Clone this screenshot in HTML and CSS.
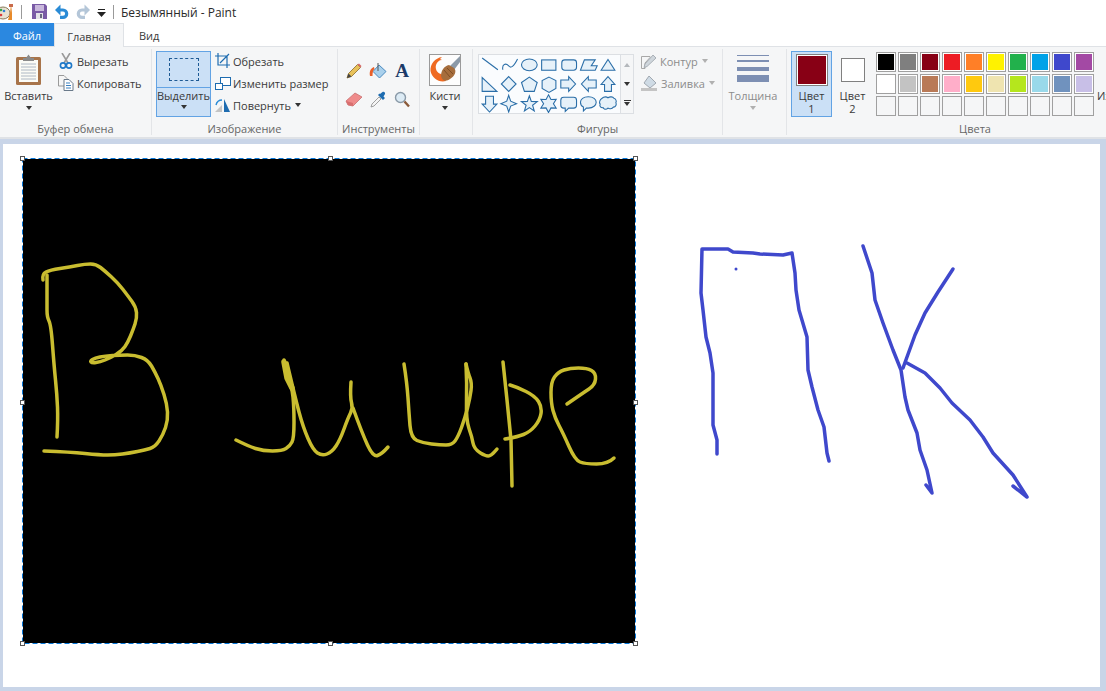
FILE: index.html
```html
<!DOCTYPE html>
<html lang="ru">
<head>
<meta charset="utf-8">
<title>Безымянный - Paint</title>
<link rel="stylesheet" href="styles.css">
</head>
<body>
<div class="app">
  <header class="titlebar">
    <svg class="ti-app" width="14" height="18" viewBox="0 0 14 18"><ellipse cx="3" cy="10" rx="7" ry="6" fill="#e8e2d0" stroke="#8a7a5a"/><circle cx="1" cy="7" r="1.3" fill="#3aa04a"/><circle cx="4" cy="8" r="1.3" fill="#2f7fd8"/><circle cx="1" cy="12" r="1.3" fill="#d83a3a"/><path d="M11 1 L10 10 L8 17 L12 17 L12 10Z" fill="#e88a2a"/><path d="M9 1h4v3H9z" fill="#c86a4a"/></svg>
    <span class="tsep"></span>
    <svg class="ti-save" width="15" height="15" viewBox="0 0 15 15"><path d="M0 0H13L15 2V15H0Z" fill="#7a5ba6"/><rect x="3" y="1" width="9" height="6" fill="#c9b8dc"/><rect x="4" y="9" width="7" height="6" fill="#e4e4e8"/><rect x="8" y="10" width="2" height="4" fill="#6a6a80"/></svg>
    <svg class="ti-undo" width="14" height="15" viewBox="0 0 14 15"><path d="M4 6 H8 A3.7 3.7 0 0 1 8 13.4 H5" fill="none" stroke="#2a8bd6" stroke-width="3.2"/><path d="M0 6 L5.5 0.5 V11.5Z" fill="#2a8bd6"/></svg>
    <svg class="ti-redo" width="14" height="15" viewBox="0 0 14 15"><path d="M10 6 H6 A3.7 3.7 0 0 0 6 13.4 H9" fill="none" stroke="#b4c6d8" stroke-width="3.2"/><path d="M14 6 L8.5 0.5 V11.5Z" fill="#b4c6d8"/></svg>
    <svg class="ti-more" width="9" height="8" viewBox="0 0 9 8"><rect x="1" y="0" width="7" height="1" fill="#222"/><path d="M0 3H9L4.5 8Z" fill="#222"/></svg>
    <span class="tsep tsep-b"></span>
    <span class="title">Безымянный - Paint</span>
  </header>

  <nav class="tabs">
    <span class="tab tab-file">Файл</span>
    <span class="tab tab-home">Главная</span>
    <span class="tab tab-view">Вид</span>
  </nav>

  <section class="ribbon">
    <div class="group g-clip">
      <div class="body">
        <div class="big big-paste">
          <svg class="big-icon" width="28" height="31" viewBox="0 0 28 31"><rect x="1" y="3" width="25" height="28" rx="1.5" fill="#a8744a"/><rect x="4" y="6" width="19" height="22" fill="#fbfbf6"/><path d="M6 10H21M6 13H21M6 16H21M6 19H21M6 22H21M6 25H21" stroke="#aeb8c4"/><path d="M8 7V4H11L13.5 0.5L16 4H19V7Z" fill="#8a8a8a"/></svg>
          <span class="btxt">Вставить</span>
          <i class="caret"></i>
        </div>
        <ul class="list list-clip">
          <li><svg width="16" height="16" viewBox="0 0 16 16"><path d="M4 0 L10 10M12 0 L6 10" stroke="#9a9a9a" stroke-width="1.6"/><circle cx="5" cy="12.5" r="2.6" fill="none" stroke="#1e78c8" stroke-width="1.6"/><circle cx="11" cy="12.5" r="2.6" fill="none" stroke="#1e78c8" stroke-width="1.6"/></svg>Вырезать</li>
          <li><svg width="16" height="16" viewBox="0 0 16 16"><path d="M0.5 0.5H6L9 3.5V11H0.5Z" fill="#f6f6f6" stroke="#9a9a9a"/><path d="M6 4.5H11L15 8.5V15.5H6Z" fill="#fff" stroke="#6a7a8a"/><path d="M8 8H12M8 10.5H13M8 13H13" stroke="#3a80c0"/></svg>Копировать</li>
        </ul>
      </div>
      <div class="glabel">Буфер обмена</div>
    </div>

    <div class="group g-image">
      <div class="body">
        <div class="select-btn">
          <div class="select-top"><span class="marquee"></span></div>
          <div class="select-bottom"><span class="btxt">Выделить</span><i class="caret caret-s"></i></div>
        </div>
        <ul class="list list-image">
          <li><svg width="16" height="16" viewBox="0 0 16 16"><path d="M3 0V12H15M0 3H12V15M14 1L5 10" fill="none" stroke="#1e6cb0" stroke-width="1.2"/></svg>Обрезать</li>
          <li><svg width="16" height="16" viewBox="0 0 16 16"><rect x="5.5" y="2.5" width="10" height="8" fill="#fff" stroke="#1e6cb0"/><rect x="0.5" y="8.5" width="7" height="6" fill="#fff" stroke="#1e6cb0"/></svg>Изменить размер</li>
          <li><svg width="16" height="16" viewBox="0 0 16 16"><path d="M9 15V2L15 15Z" fill="#1e6cb0"/><path d="M0 15L7 8V15Z" fill="#c4c4c4"/><path d="M1 8 C2 4 4 3 7 3" fill="none" stroke="#2a8bd6" stroke-width="1.4"/></svg>Повернуть<i class="caret caret-in"></i></li>
        </ul>
      </div>
      <div class="glabel">Изображение</div>
    </div>

    <div class="group g-tools">
      <div class="body tools">
        <span class="tool"><svg width="16" height="16" viewBox="0 0 16 16"><path d="M1 15L2.5 10.5L11.5 1.5L14.5 4.5L5.5 13.5Z" fill="#e8c25a" stroke="#8a6a2a" stroke-width=".8"/><path d="M11.5 1.5L14.5 4.5L15.5 3L13 .5Z" fill="#d86a6a"/><path d="M1 15L2.5 10.5L5.5 13.5Z" fill="#444"/></svg></span>
        <span class="tool"><svg width="18" height="18" viewBox="0 0 18 18"><path d="M10 3L17 9.5L10.5 16L4 9.5Z" fill="#a9d0ec" stroke="#4a8ac0"/><path d="M9 1V9" stroke="#555"/><path d="M1 14C0 9 2 6 5 5L5.5 7C4 8 3.5 11 3.5 14Z" fill="#e8602a"/></svg></span>
        <span class="tool tool-a">A</span>
        <span class="tool"><svg width="18" height="16" viewBox="0 0 18 16"><path d="M1 10L10 2L17 6L8 15L3 14Z" fill="#ef8b8b" stroke="#c87070" stroke-width=".8"/><path d="M1 10L8 12L8 15L3 14Z" fill="#d86f6f"/></svg></span>
        <span class="tool"><svg width="16" height="17" viewBox="0 0 16 17"><path d="M1 16L2 13L9 6L11 8L4 15Z" fill="#f4f4f4" stroke="#8a8a8a" stroke-width=".8"/><path d="M8 4L13 9L15 7L13.5 5.5L15 3C15.5 1.5 14 0 12.5 1L10 3L9.5 2.5Z" fill="#1e6cb0"/></svg></span>
        <span class="tool"><svg width="16" height="17" viewBox="0 0 16 17"><circle cx="6.5" cy="6.5" r="5" fill="#dcebf5" stroke="#8a9aa8" stroke-width="1.4"/><path d="M10.5 10.5L15 15.5" stroke="#8a5a3a" stroke-width="2.4"/></svg></span>
      </div>
      <div class="glabel">Инструменты</div>
    </div>

    <div class="group g-brush">
      <div class="body">
        <div class="big big-brush">
          <svg class="big-icon" width="32" height="32" viewBox="0 0 32 32"><rect x=".5" y=".5" width="31" height="31" fill="#fdfdfd" stroke="#9a9a9a"/><path d="M13 3C6 4 1 10 1.500 17C3 24 10 29 17 27L12 20C8 19 6 15 7 11C8 8 10 6 13 6L11 5Z" fill="#ef6a22"/><path d="M31 2L21 12L25 16L31 8Z" fill="#8c9aa8"/><path d="M20 11C15 12 12 17 12 22C13 27 17 28 21 25C26 22 28 17 25 14Z" fill="#a66d3c"/><path d="M15 16L21 23M18 14L24 20" stroke="#7e4e26"/></svg>
          <span class="btxt">Кисти</span>
          <i class="caret"></i>
        </div>
      </div>
      <div class="glabel">Кисти</div>
    </div>

    <div class="group g-shapes">
      <div class="body shapes-body">
        <div class="gallery">
          <svg class="shapes" width="143" height="59" viewBox="-2 0 143 59"><g fill="#e6f1f9" stroke="#2a6ea8" stroke-width="1.1">
            <path d="M1 3L17 15" fill="none"/><path d="M22 15C21 9 25 8 28 11C30 14 33 12 37 4" fill="none"/><ellipse cx="49" cy="10" rx="8" ry="6"/><rect x="61.5" y="5" width="14.5" height="10.5"/><rect x="82" y="5" width="15" height="10.5" rx="3"/><path d="M101 15.5L105 5H116L112 11H118L116 15.5Z"/><path d="M122 15.5L129 4.5L136 15.5Z"/>
            <path d="M1 23V37H16Z"/><path d="M28 22L35.5 29.5L28 37L20.5 29.5Z"/><path d="M49 22.5L57 28L54 37H44L41 28Z"/><path d="M69 22.5L76 26V34L69 38L62 34V26Z"/><path d="M81 25.5H89V22L96 29.5L89 37V33.5H81Z"/><path d="M117 25.5H109V22L102 29.5L109 37V33.5H117Z"/><path d="M129 22L136 30H132.5V37H125.5V30H122Z"/>
            <path d="M4.5 42H12.5V50H16L8.5 58L1 50H4.5Z"/><path d="M28 41L30 47L36 49.5L30 52L28 58L26 52L20 49.5L26 47Z"/><path d="M49 41.5L51 47.2L57.1 47.4L52.3 51.1L54 56.9L49 53.5L44 56.9L45.7 51.1L40.9 47.4L47 47.2Z"/><path d="M68.5 40.5L71 45.2L76.3 45L73.5 49.5L76.3 54L71 53.8L68.5 58.5L66 53.8L60.7 54L63.5 49.5L60.7 45L66 45.2Z"/>
            <path d="M84 43H94Q97 43 97 46V51Q97 54 94 54H89L85.5 57.5V54H84Q81 54 81 51V46Q81 43 84 43Z"/><path d="M109 42.5C114 42.5 117 45 117 48C117 51 114 54 109 54C108 54 107.5 54 107 54L104 57V53C102 52 101 50 101 48C101 45 104 42.5 109 42.5Z"/><path d="M123 44C125 42 128 42.5 129 43.5C131 42 134 42.5 135 44C137 44.5 138 47 137 48.5C138 50 137 53 134.500 53C133 55 130 55 129 54C127 56 124 55 124 53.500C122 54 120 52 121 50C119.5 48 121 45 123 44Z"/>
          </g></svg>
          <div class="scroll">
            <span class="sbtn"><i class="tri-up"></i></span>
            <span class="sbtn"><i class="caret"></i></span>
            <span class="sbtn"><i class="bar"></i><i class="caret"></i></span>
          </div>
        </div>
        <ul class="list list-shapes">
          <li><svg width="16" height="16" viewBox="0 0 16 16"><path d="M.5 3.5H9V4.5L4 10V15.5H.5Z" fill="none" stroke="#a8a8a8"/><path d="M4 11L12 2L15 5L6 13.5L3 14.5Z" fill="#cfd6dc" stroke="#9aa2aa" stroke-width=".8"/></svg>Контур<i class="caret caret-in caret-dis"></i></li>
          <li><svg width="17" height="16" viewBox="0 0 17 16"><path d="M8 1L15 8L9 13L3 8Z" fill="#cfdbe5" stroke="#a0a8b0"/><rect x="0" y="13" width="16" height="3" fill="#c4c4c4"/></svg>Заливка<i class="caret caret-in caret-dis"></i></li>
        </ul>
      </div>
      <div class="glabel">Фигуры</div>
    </div>

    <div class="group g-size">
      <div class="body">
        <div class="big big-size">
          <div class="lines"><i class="l1"></i><i class="l2"></i><i class="l4"></i><i class="l7"></i></div>
          <span class="btxt dis">Толщина</span>
          <i class="caret caret-dis"></i>
        </div>
      </div>
    </div>

    <div class="group g-colors">
      <div class="body colors-body">
        <div class="cbtn cbtn-on">
          <span class="sw1"><i></i></span>
          <span class="ctxt">Цвет<br>1</span>
        </div>
        <div class="cbtn">
          <span class="sw2"></span>
          <span class="ctxt">Цвет<br>2</span>
        </div>
        <div class="palette">
          <i class="c c1"></i><i class="c c2"></i><i class="c c3"></i><i class="c c4"></i><i class="c c5"></i><i class="c c6"></i><i class="c c7"></i><i class="c c8"></i><i class="c c9"></i><i class="c c10"></i>
          <i class="c c11"></i><i class="c c12"></i><i class="c c13"></i><i class="c c14"></i><i class="c c15"></i><i class="c c16"></i><i class="c c17"></i><i class="c c18"></i><i class="c c19"></i><i class="c c20"></i>
          <i class="c e"></i><i class="c e"></i><i class="c e"></i><i class="c e"></i><i class="c e"></i><i class="c e"></i><i class="c e"></i><i class="c e"></i><i class="c e"></i><i class="c e"></i>
        </div>
        <span class="edit">Изменить</span>
      </div>
      <div class="glabel">Цвета</div>
    </div>
  </section>

  <main class="workspace">
    <div class="page">
      <div class="selection"></div>
      <svg class="drawing" width="1097" height="543" viewBox="3 144 1097 543">
        <g fill="none" stroke-linejoin="round" stroke-linecap="round" stroke-width="3.5">
          <g stroke="#c9bd30">
            <path d="M43 280Q42 274 46 272Q50 270 60 268.5Q70 267 77.500 265.5Q85 264 90.5 264Q96 264 100.5 267.5Q105 271 111.5 277Q118 283 123 289.5Q128 296 132 301.5Q136 307 136.5 312.5Q137 318 135 324Q133 330 130.5 336Q128 342 125 346.5Q122 351 116 354.5Q110 358 105 360Q100 362 96 362.5Q92 363 91 362Q90 361 92.5 359.5Q95 358 100 357Q105 356 112.5 355.5Q120 355 127.5 355Q135 355 141.5 357.5Q148 360 151.5 366Q155 372 158 378.5Q161 385 164 394.5Q167 404 167.5 412Q168 420 165.5 427.5Q163 435 159 441Q155 447 150 448.5Q145 450 137.5 451.5Q130 453 122.5 454Q115 455 107.5 455Q100 455 85 453.5Q70 452 44 451"/>
            <path d="M47 275L47 310Q47 317 49 321Q51 325 52.5 345Q54 365 55.500 380Q57 395 57.500 407Q58 420 57 437"/>
            <path d="M236 440Q248 446 255.5 448.5Q263 451 272.5 451Q282 451 286 448.5Q290 446 292 442Q294 438 294 422.5Q294 407 293 397Q292 387 288.5 380Q285 373 284 360"/>
            <path d="M284 362L287 378L292 388" stroke-width="5.500"/>
            <path d="M287 363Q295 397 299 412Q303 427 308 438.5Q313 450 317.5 453Q322 456 327 454Q332 452 336 446Q340 440 344 429Q348 418 350.5 413Q353 408 351.5 402.5Q350 397 351 382"/>
            <path d="M353 408Q362 433 367.5 445Q373 457 377.5 455.5Q382 454 388 447"/>
            <path d="M404 364Q407 383 408 398Q409 413 410 425.5Q411 438 417 440.5Q423 443 431.5 444Q440 445 446 445Q452 445 455 441Q458 437 461.5 427.5Q465 418 467.5 408Q470 398 471 390.5Q472 383 470 378Q468 373 466 364"/>
            <path d="M466 364Q467 383 466.5 401Q466 420 469 428.5Q472 437 473 443Q474 449 480.5 453Q487 457 490 455.5Q493 454 497 449"/>
            <path d="M503 362L507 400L511 440L512 486"/>
            <path d="M510 385Q517 387 526 391.5Q535 396 538.5 401.5Q542 407 541 413.5Q540 420 535 426Q530 432 523.5 434.5Q517 437 505 439"/>
            <path d="M567 404Q583 393 589 389Q595 385 595.5 379Q596 373 591.5 370.5Q587 368 578.5 368Q570 368 564 370Q558 372 554.5 377Q551 382 551 392.5Q551 403 553 410.5Q555 418 559 425.5Q563 433 569 446.5Q575 460 580 462Q585 464 596.5 464Q608 464 614 458"/>
          </g>
          <g stroke="#3f48cc">
            <path d="M717 454L717 440L713 425L713 373L710 353L706 337L703 310L701 293L702 249L728 249L733 252L753 253L760 254L783 255L792 253L795 273L796 290L799 310L807 337L808 370L812 387L818 410L824 427L827 453L829 461"/>
            <path d="M736 269L736 269" stroke-width="3"/>
            <path d="M863 246L872 273L875 300L883 323L893 350L901 370L905 397L908 410L917 433L920 450L927 470L932 493L926 485"/>
            <path d="M953 269L938 292L925 313L915 335L907 357L903 368"/>
            <path d="M907 363L925 373L940 388L952 403L970 420L983 437L993 453L1013 475L1027 497L1013 486"/>
          </g>
        </g>
        <rect class="ants" x="22.5" y="158.5" width="613" height="485"/>
        <g class="handles">
          <rect x="20.5" y="156.5" width="4" height="4"/><rect x="328.5" y="156.5" width="4" height="4"/><rect x="633.5" y="156.5" width="4" height="4"/>
          <rect x="20.5" y="400.5" width="4" height="4"/><rect x="633.5" y="400.5" width="4" height="4"/>
          <rect x="20.5" y="641.5" width="4" height="4"/><rect x="328.5" y="641.5" width="4" height="4"/><rect x="633.5" y="641.5" width="4" height="4"/>
        </g>
      </svg>
    </div>
  </main>
</div>
</body>
</html>
```

FILE: styles.css
```css
html, body { margin: 0; padding: 0; height: 100%; overflow: hidden; }
body { font-family: "Open Sans", "Noto Sans", sans-serif; font-size: 11px; letter-spacing: 0; color: #3a3a3a; }
svg { display: block; flex-shrink: 0; }
ul { list-style: none; margin: 0; padding: 0; }
i { display: block; font-style: normal; }

.app { display: flex; flex-direction: column; width: 1106px; height: 691px; overflow: hidden; }

.titlebar { display: flex; align-items: center; height: 23px; background: #fff; flex-shrink: 0; }
.ti-app { margin-right: 7px; }
.tsep { width: 1px; height: 14px; background: #9a9a9a; }
.ti-save { margin-left: 10px; }
.ti-undo { margin-left: 8px; }
.ti-redo { margin-left: 7px; }
.ti-more { margin-left: 7px; margin-top: 3px; }
.tsep-b { margin-left: 7px; }
.title { margin: 2px 0 0 7px; font-size: 12px; color: #2a2a2a; }

.tabs { display: flex; height: 24px; flex-shrink: 0; background: #fff; border-bottom: 1px solid #dfe2e6; box-sizing: border-box; }
.tab { display: flex; align-items: center; justify-content: center; height: 23px; padding-top: 1px; box-sizing: border-box; }
.tab-file { width: 54px; background: #2b88e0; color: #fff; }
.tab-home { width: 70px; background: #f5f6f7; border: 1px solid #dfe2e6; border-bottom: 0; height: 24px; }
.tab-view { padding-left: 15px; }

.ribbon { display: flex; height: 92px; box-sizing: border-box; background: #f5f6f7; border-bottom: 2px solid #dfe2e6; flex-shrink: 0; overflow: hidden; }
.group { display: flex; flex-direction: column; margin-top: 2px; height: 86px; border-right: 1px solid #e3e5e8; box-sizing: border-box; flex-shrink: 0; }
.body { display: flex; height: 73px; }
.glabel { height: 13px; line-height: 13px; text-align: center; color: #666; white-space: nowrap; }

.g-clip { width: 152px; }
.g-image { width: 186px; }
.g-tools { width: 82px; }
.g-brush { width: 53px; }
.g-shapes { width: 250px; }
.g-size { width: 64px; }
.g-colors { width: 376px; border-right: 0; }
.g-brush .glabel { visibility: hidden; }

.big { display: flex; flex-direction: column; align-items: center; padding-top: 5px; box-sizing: border-box; }
.big-icon { height: 31px; }
.btxt { display: block; line-height: 14px; margin-top: 4px; white-space: nowrap; }
.dis { color: #8c8c8c; }
.caret { width: 0; height: 0; border-left: 3.5px solid transparent; border-right: 3.5px solid transparent; border-top: 4px solid #333; margin-top: 3px; }
.caret-s { margin-top: 2px; }
.caret-in { margin: 0 0 0 4px; }
.caret-dis { border-top-color: #b0b0b0; }

.big-paste { width: 47px; margin-left: 5px; }
.big-brush { width: 50px; }
.big-brush .big-icon { height: 32px; }
.big-brush .btxt { margin-top: 3px; }

.list li { display: flex; align-items: center; height: 22px; white-space: nowrap; }
.list { padding-top: 1px; }
.list svg { margin-right: 3px; }
.list-clip { margin-left: 6px; }
.list-image { margin-left: 4px; }
.list-image svg { margin-right: 2px; }
.list-shapes { margin-left: 7px; color: #8c8c8c; }

.select-btn { display: flex; flex-direction: column; width: 55px; height: 66px; margin: 2px 0 0 4px; background: #cbe0f6; border: 1px solid #62a3e4; box-sizing: border-box; }
.select-top { display: flex; align-items: center; justify-content: center; height: 36px; border-bottom: 1px solid #62a3e4; box-sizing: border-box; }
.marquee { width: 28px; height: 21px; border: 1px dashed #1e5a94; }
.select-bottom { display: flex; flex-direction: column; align-items: center; }
.select-bottom .btxt { margin-top: 1px; }

.tools { display: grid; grid-template-columns: repeat(3, 24px); grid-auto-rows: 28px; padding: 8px 0 0 4px; box-sizing: border-box; align-content: start; }
.tool { display: flex; align-items: center; justify-content: center; }
.tool-a { font-family: "Liberation Serif", serif; font-weight: 700; font-size: 19px; color: #1b3a68; }

.shapes-body { padding-left: 5px; box-sizing: border-box; }
.gallery { display: flex; width: 156px; height: 60px; margin-top: 5px; background: #f8fafc; border: 1px solid #dcdfe3; box-sizing: border-box; }
.shapes { background: #fafcfe; width: 141px; height: 58px; }
.scroll { display: flex; flex-direction: column; width: 13px; border-left: 1px solid #dcdfe3; background: #f5f6f7; }
.sbtn { display: flex; flex-direction: column; align-items: center; justify-content: center; height: 19.33px; }
.sbtn .caret { margin-top: 1px; }
.tri-up { width: 0; height: 0; border-left: 3.5px solid transparent; border-right: 3.5px solid transparent; border-bottom: 4px solid #b4b8bc; }
.bar { width: 7px; height: 1px; background: #333; }

.big-size { width: 60px; padding-top: 6px; }
.lines { display: flex; flex-direction: column; width: 32px; }
.lines i { background: #7d8fb3; }
.l1 { height: 1px; }
.l2 { height: 2px; margin-top: 4px; }
.l4 { height: 4px; margin-top: 5px; }
.l7 { height: 7px; margin-top: 4px; }
.big-size .btxt { margin-top: 7px; }

.colors-body { padding-left: 4px; box-sizing: border-box; }
.cbtn { display: flex; flex-direction: column; align-items: center; width: 41px; height: 66px; margin-top: 2px; box-sizing: border-box; border: 1px solid transparent; }
.cbtn-on { background: #cbe0f6; border-color: #62a3e4; }
.sw1 { width: 32px; height: 32px; margin-top: 2px; box-sizing: border-box; border: 1px solid #808080; padding: 1px; background: #fff; }
.sw1 i { width: 100%; height: 100%; background: #880015; }
.sw2 { width: 24px; height: 24px; margin: 6px 0 0 1px; box-sizing: border-box; border: 1px solid #808080; background: #fff; }
.ctxt { line-height: 13px; text-align: center; }
.cbtn-on .ctxt { margin-top: 3px; }
.cbtn .sw2 + .ctxt { margin-top: 7px; }

.palette { display: grid; grid-template-columns: repeat(10, 20px); grid-auto-rows: 20px; gap: 2px; margin: 3px 0 0 3px; align-content: start; }
.c { box-sizing: border-box; border: 1px solid #a0a0a0; box-shadow: inset 0 0 0 1px #fff; }
.e { box-shadow: none; background: #f5f6f7; }
.c1 { background: #000; } .c2 { background: #7f7f7f; } .c3 { background: #880015; } .c4 { background: #ed1c24; } .c5 { background: #ff7f27; }
.c6 { background: #fff200; } .c7 { background: #22b14c; } .c8 { background: #00a2e8; } .c9 { background: #3f48cc; } .c10 { background: #a349a4; }
.c11 { background: #fff; } .c12 { background: #c3c3c3; } .c13 { background: #b97a57; } .c14 { background: #ffaec9; } .c15 { background: #ffc90e; }
.c16 { background: #efe4b0; } .c17 { background: #b5e61d; } .c18 { background: #99d9ea; } .c19 { background: #7092be; } .c20 { background: #c8bfe7; }
.edit { margin: 40px 0 0 3px; line-height: 14px; white-space: nowrap; }

.workspace { flex: 1; display: flex; padding: 5px 6px 4px 3px; background: #c9d5e8; min-height: 0; }
.page { position: relative; flex: 1; background: #fff; }
.selection { width: 612px; height: 484px; margin: 15px 0 0 20px; background: #000; }
.drawing { position: absolute; left: 0; top: 0; }
.ants { fill: none; stroke: #0a78d8; stroke-dasharray: 5 3; }
.handles rect { fill: #fff; stroke: #555; }
```
